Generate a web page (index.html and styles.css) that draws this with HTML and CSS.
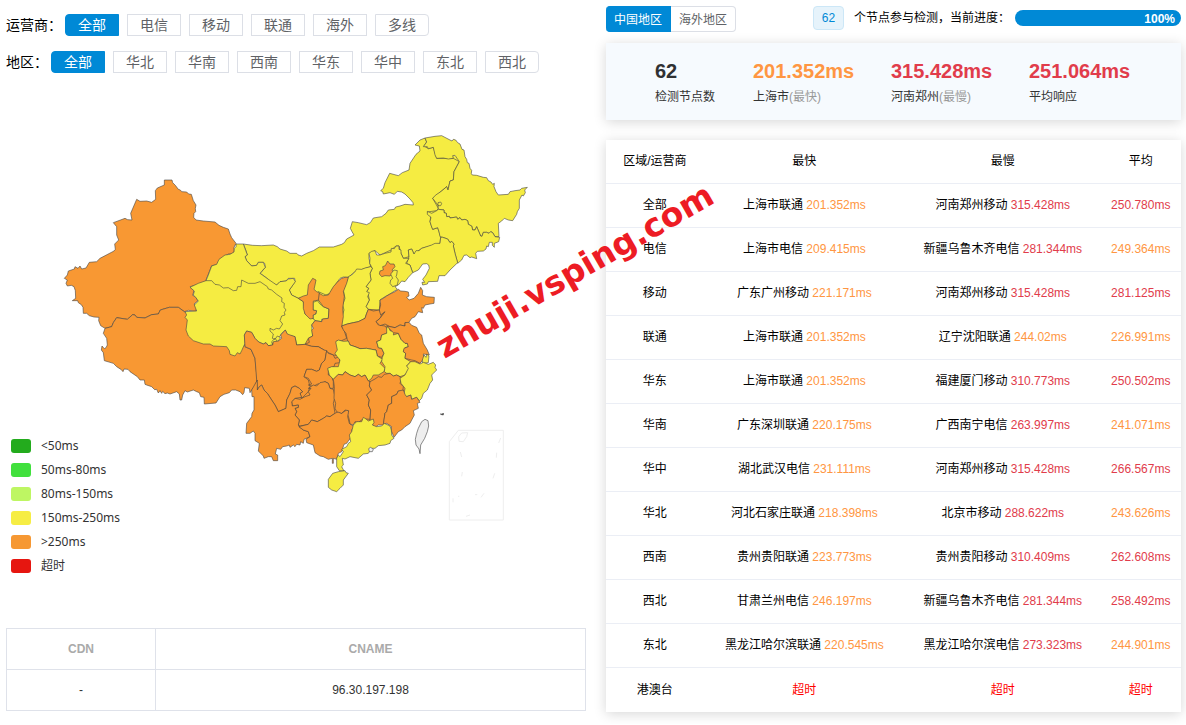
FILE: index.html
```html
<!DOCTYPE html>
<html lang="zh-CN">
<head>
<meta charset="utf-8">
<meta name="viewport" content="width=device-width, initial-scale=1">
<title>Ping 检测</title>
<link rel="stylesheet" href="styles.css">
</head>
<body>
<main class="page">
<section class="left">
  <div class="filters">
    <div class="filter" role="group" aria-labelledby="isp">
      <span class="filter-name" id="isp">运营商：</span>
      <button class="opt active">全部</button><button class="opt">电信</button><button class="opt">移动</button><button class="opt">联通</button><button class="opt">海外</button><button class="opt">多线</button>
    </div>
    <div class="filter" role="group" aria-labelledby="area">
      <span class="filter-name" id="area">地区：</span>
      <button class="opt active">全部</button><button class="opt">华北</button><button class="opt">华南</button><button class="opt">西南</button><button class="opt">华东</button><button class="opt">华中</button><button class="opt">东北</button><button class="opt">西北</button>
    </div>
  </div>
  <div class="chart">
    <svg class="map" viewBox="18 240 1740 1620" role="img" aria-label="中国地图">
      <g class="land">
        <path class="y" transform="translate(870 360)" d="M410,70 500,110 540,200 600,320 560,390 490,400 440,415 370,425 340,470 310,500 250,560 170,600 -20,560 -90,470 0,490 170,480 380,330z"/>
        <path class="o" transform="translate(870 840)" d="M-100,200 100,160 150,140 270,65 320,150 400,235 340,340 300,430 190,430 60,480 -60,430z"/>
      </g>
      <g transform="translate(150 510)">
        <path class="o" d="M343,30 366,30 368,38 376,46 385,58 391,60 395,65 410,66 416,72 424,73 430,92 438,105 436,115 437,125 432,130 431,142 438,150 460,153 495,156 507,166 520,172 535,177 540,192 545,203 558,220 552,232 553,245 545,252 535,252 520,262 505,275 502,284 485,287 478,305 468,330 470,335 421,350 432,362 428,376 436,380 444,392 432,402 440,412 438,424 415,421 403,425 385,412 358,412 331,420 325,432 305,434 285,444 260,442 255,435 248,434 232,448 200,443 190,458 185,470 165,475 152,467 146,452 147,442 132,441 118,437 110,430 100,430 99,412 94,404 85,398 83,392 67,392 77,385 76,362 72,350 64,346 52,348 48,340 52,330 43,325 52,315 55,303 73,297 75,290 84,295 90,288 95,297 108,294 118,277 140,275 150,265 192,243 196,238 194,222 206,210 200,195 200,170 190,158 225,145 233,149 246,150 242,130 260,88 270,94 290,93 305,97 317,88 316,62 322,54 343,45z"/>
        <path class="o" d="M165,475 185,470 190,458 200,443 232,448 248,434 255,435 260,442 285,444 305,434 325,432 331,420 358,412 385,412 403,425 410,430 560,480 585,530 603,538 615,565 622,630 614,650 605,660 600,668 598,655 584,653 582,668 578,674 570,665 557,660 545,660 538,668 522,673 510,680 498,699 463,702 462,682 452,680 448,668 440,665 430,660 412,666 405,662 398,675 395,690 390,690 388,672 380,665 360,672 352,669 345,671 338,664 335,670 330,662 325,669 320,658 314,659 305,650 290,645 285,643 283,630 270,630 262,620 240,605 234,598 222,597 219,605 214,599 200,590 190,580 180,577 163,572 160,548 154,540 156,528 163,536 168,533 172,525 170,505 160,490z"/>
      </g>
      <g transform="translate(870 360)">
        <path class="y" d="M-140,372 -112,376 -85,377 -50,375 -38,380 -30,387 -10,393 0,400 20,400 25,405 35,408 50,400 70,392 88,381 130,381 155,373 163,368 170,357 192,345 186,335 181,325 187,305 205,308 230,314 241,308 250,294 275,290 288,280 295,270 313,268 317,261 330,258 345,253 370,255 369,248 360,237 345,222 335,216 322,214 313,223 300,218 280,222 278,215 272,212 280,205 285,188 299,160 325,167 337,158 357,150 360,130 378,103 390,93 388,78 375,75 390,60 405,54 410,66 402,78 415,86 430,82 440,115 490,115 508,125 492,155 490,180 480,183 474,210 470,200 428,235 445,265 440,272 412,276 422,290 420,305 428,328 443,323 452,350 450,370 395,385 372,402 365,387 355,390 357,410 340,415 333,400 327,378 318,378 303,390 270,405 255,392 237,400 237,415 242,440 195,455 175,472 160,471 150,475 132,500 120,520 108,525 85,515 70,530 25,535 5,525 -2,510 5,500 15,485 14,475 -5,475 -12,483 -30,485 -40,495 -52,490 -65,478 -78,468 -90,460 -85,455 -74,442 -76,430 -80,427 -95,427 -100,436 -115,438 -130,422 -135,410 -128,405 -132,392z"/>
        <path class="y" d="M405,54 435,49 455,47 480,60 486,63 490,58 497,60 503,68 510,72 516,88 522,90 525,110 530,118 532,128 537,130 540,145 545,151 544,161 547,165 560,166 580,172 590,173 595,182 603,186 608,193 613,190 612,200 618,215 625,225 655,223 660,215 675,212 690,210 695,205 712,202 704,210 706,218 700,228 696,225 688,240 688,265 682,275 680,283 668,302 655,300 643,295 635,303 625,310 627,350 615,350 608,338 602,335 597,340 590,337 580,337 576,349 572,348 562,325 560,320 555,330 548,330 545,318 535,313 533,302 525,298 515,300 510,293 503,298 500,291 480,294 478,289 470,290 469,280 462,278 462,270 445,268 444,256 436,245 428,235 436,226 455,213 470,200 474,210 480,183 490,180 492,155 500,140 508,125 495,106 488,107 490,115 475,117 460,114 440,115 435,105 430,82 415,86 412,80 400,80 410,66z"/>
        <path class="n" d="M444,248 452,246 455,251 452,257 444,257z"/>
        <path class="y" d="M445,268 462,270 462,278 469,280 470,290 478,289 480,294 500,291 503,298 510,293 515,300 525,298 533,302 535,313 545,318 548,330 555,330 560,320 572,348 576,349 580,337 590,337 597,340 602,335 608,338 615,350 629,352 626,365 613,370 613,382 607,376 607,367 598,367 595,380 590,378 588,387 580,393 562,394 557,400 560,416 545,411 540,413 530,405 522,406 515,420 503,430 495,400 490,378 492,372 485,364 480,368 473,357 458,352 450,350 447,335 443,323 428,328 424,318 420,305 423,292 412,283 412,274 425,280 440,272z"/>
        <path class="y" d="M452,352 458,352 473,357 480,368 485,364 492,372 490,378 495,400 503,428 480,450 465,467 447,467 443,484 415,485 412,492 398,495 396,487 404,487 398,478 408,465 418,445 416,435 410,431 398,432 385,450 368,458 360,435 350,430 357,410 355,390 365,387 372,402 378,392 387,392 395,385 410,380 425,375 435,370 450,370z"/>
        <path class="y" d="M237,400 245,394 255,392 260,405 270,405 285,400 303,396 304,385 313,386 318,378 327,378 327,388 333,390 333,400 340,415 357,415 347,430 360,435 368,458 355,472 345,485 335,483 325,495 315,500 322,508 312,514 300,522 285,530 270,540 268,570 235,568 228,560 238,540 235,525 230,515 236,505 228,500 243,480 240,460 247,445 239,430 240,415z"/>
        <path class="o" d="M293,423 300,432 312,432 315,440 306,450 310,457 300,468 285,467 275,470 268,462 270,453 280,450 278,440 286,437z"/>
        <path class="y" d="M312,450 322,452 320,465 318,470 325,480 322,495 308,500 300,490 302,480 308,475 302,462z"/>
      </g>
      <g transform="translate(870 840)">
        <path class="y" d="M242,-40 225,-36 215,-32 200,-33 195,-25 185,-15 175,-10 168,10 160,30 165,55 158,75 162,90 155,115 155,138 172,132 190,128 205,125 215,120 225,115 230,100 235,88 228,80 238,60 233,50 238,38 230,35 236,25 228,20 243,0 240,-20 247,-35z"/>
      </g>
      <g transform="translate(540 690)">
        <path class="y" d="M168,42 190,42 202,75 195,80 200,92 215,108 230,106 235,97 250,97 256,112 240,130 265,148 290,165 300,155 318,153 325,147 340,145 346,155 328,180 335,195 355,205 370,215 375,252 400,265 405,272 395,285 398,318 385,325 375,343 350,345 345,320 322,315 316,300 305,310 290,335 265,345 240,300 78,152 85,135 95,108 110,103 117,88 135,75 150,73 162,66 163,55 168,50z"/>
        <path class="y" d="M30,172 55,160 78,152 95,152 105,163 118,165 130,174 145,173 160,182 170,181 173,170 183,170 185,150 205,160 225,160 240,155 262,170 265,177 275,180 290,193 306,204 305,215 313,220 312,232 318,240 313,247 315,255 305,258 300,272 308,282 298,297 290,295 280,300 270,295 270,303 280,312 277,325 285,328 292,318 302,323 293,335 285,325 275,335 278,345 265,347 258,338 250,342 236,336 225,325 215,307 200,303 193,315 195,340 185,362 180,372 172,368 165,378 150,373 148,362 140,350 100,348 90,342 70,342 40,332 25,318 18,300 22,270 15,262 20,255 15,245 50,243 43,225 55,213 47,202 40,195 43,183z"/>
        <path class="o" d="M398,145 408,150 405,165 402,178 410,185 418,188 418,210 400,213 400,240 410,242 408,252 400,255 400,265 390,267 375,252 370,235 370,215 355,205 370,198 382,195 385,165z"/>
        <path class="y" d="M400,217 412,212 420,222 430,230 447,237 445,265 425,268 425,275 405,272 400,265 400,255 408,252 410,242 400,240z"/>
        <path class="o" d="M485,145 495,142 505,142 500,160 490,185 493,200 488,235 490,260 485,290 492,300 500,325 485,332 470,333 475,350 480,365 485,378 460,375 438,365 432,360 415,350 395,349 375,343 388,337 385,325 398,318 395,300 400,295 395,285 405,272 425,275 428,267 445,265 447,237 430,230 415,210 418,190 430,197 445,195 460,170 475,153z"/>
        <path class="o" d="M195,350 193,315 200,303 215,307 225,325 236,336 250,342 258,338 265,347 278,345 280,335 295,333 305,325 302,315 316,300 322,312 345,320 350,345 375,343 395,349 415,350 432,360 440,362 435,390 425,400 418,420 410,424 395,418 380,418 372,440 385,450 390,470 385,485 365,505 360,490 368,485 358,475 345,468 335,473 330,490 320,510 318,535 295,545 285,525 275,510 262,490 252,480 245,465 238,470 232,480 230,450 225,385 213,358z"/>
        <path class="o" d="M440,362 445,370 460,375 465,385 478,380 480,398 465,400 462,410 445,415 445,435 455,440 460,455 460,475 450,475 445,460 435,455 425,460 410,463 400,470 385,465 395,462 385,445 372,440 380,418 395,418 410,424 418,420 425,400 435,390z"/>
        <path class="o" d="M460,478 465,500 460,520 465,550 450,560 440,558 430,565 412,575 395,570 385,583 360,588 355,585 358,570 345,555 350,545 345,535 355,532 355,525 337,528 335,515 345,505 360,508 375,500 390,495 385,485 393,475 385,475 400,465 410,468 420,458 435,455 445,460 450,475z"/>
        <path class="o" d="M215,480 232,450 232,480 238,470 245,465 252,480 262,490 275,510 285,525 295,545 318,535 320,510 330,490 335,473 345,468 358,475 368,485 360,490 365,502 345,505 335,515 337,528 355,525 355,532 345,535 350,545 345,555 358,570 355,585 357,590 370,600 385,605 390,620 372,628 370,640 362,635 360,645 350,643 345,650 340,645 330,652 328,645 320,648 308,650 302,658 290,655 286,672 293,675 293,692 280,692 275,680 265,680 252,685 250,678 235,663 238,640 225,632 225,610 220,603 210,610 198,610 200,580 215,560 216,550 222,540 222,500 216,500z"/>
        <path class="o" d="M465,550 475,545 485,550 500,540 508,545 503,560 508,580 522,590 515,600 518,615 500,640 492,643 485,665 475,670 470,688 460,685 460,700 457,700 457,685 445,688 430,680 420,678 405,668 400,645 380,638 378,628 390,620 385,605 370,600 357,590 385,583 395,570 412,575 430,565 440,558 450,560z"/>
      </g>
      <g transform="translate(870 840)">
        <path class="o" d="M155,138 172,132 190,128 205,125 215,120 225,115 230,100 235,88 250,93 268,90 272,100 285,95 275,105 270,115 258,125 265,135 285,138 295,150 290,160 275,165 272,180 260,185 265,203 275,205 282,220 275,232 262,228 258,210 245,208 230,205 210,206 195,200 180,195 172,180 168,160 160,150z"/>
        <path class="y" d="M137,185 145,180 160,184 175,183 180,195 195,200 210,206 230,205 245,208 258,210 262,228 278,238 270,250 285,265 282,275 265,285 250,285 245,295 235,303 225,285 215,290 205,283 195,290 180,285 165,275 158,285 145,283 130,298 118,285 113,265 125,260 145,260 150,240 140,228 135,220 142,210z"/>
        <path class="o" d="M130,298 145,283 158,285 165,275 180,285 195,290 205,283 215,290 225,285 235,303 240,305 238,318 245,330 230,345 238,360 235,375 242,390 240,418 228,417 215,420 205,427 195,425 190,435 180,432 178,420 174,405 176,392 165,390 155,400 140,395 135,385 137,370 132,355 133,320z"/>
        <path class="y" d="M290,140 297,142 300,152 312,155 310,165 325,160 333,178 345,190 352,190 355,200 345,203 340,215 347,220 345,235 362,245 350,258 358,265 345,285 330,290 320,285 310,288 300,280 290,280 283,275 285,260 275,245 277,232 282,220 275,205 265,203 260,185 272,180 275,165 290,160z"/>
        <path class="o" d="M240,305 255,297 265,290 275,292 283,283 300,280 310,288 320,285 330,290 333,300 330,310 340,320 338,335 325,333 320,343 305,350 305,370 295,375 290,395 285,400 280,435 265,435 255,442 240,425 242,390 235,375 238,360 230,345 245,330 238,318z"/>
        <path class="o" d="M270,60 280,55 290,48 300,42 315,35 325,28 332,33 345,34 355,36 357,48 350,52 357,60 372,55 385,40 392,22 398,32 397,45 410,50 433,52 432,70 420,72 405,75 400,85 395,83 398,98 385,95 375,110 365,115 355,130 345,128 345,138 330,135 315,143 300,140 285,132 270,137 258,125 270,115 285,95 272,105 268,90 272,75z"/>
        <path class="o" d="M290,138 315,143 330,135 345,138 345,128 357,127 365,136 380,142 388,160 395,165 400,190 412,210 418,225 400,222 402,235 390,250 375,242 365,240 345,235 347,220 340,215 342,205 355,200 352,190 345,190 333,178 325,160 310,158z"/>
        <path class="y" d="M402,225 408,232 410,222 417,228 415,248 398,250 397,240z"/>
        <path class="y" d="M362,245 375,245 390,252 400,247 415,253 430,247 437,255 435,262 440,270 430,280 425,285 428,300 420,310 412,330 400,340 395,355 388,362 380,352 365,358 362,345 350,350 342,343 345,325 333,310 330,295 345,285 355,265 350,258z"/>
        <path class="o" d="M340,330 345,343 350,350 362,345 365,358 380,352 390,367 382,370 385,385 370,392 373,405 365,420 360,430 345,440 335,450 325,455 312,472 303,450 305,440 290,430 280,432 285,400 290,395 295,375 305,370 305,350 320,343 325,333z"/>
        <path class="y" d="M190,435 200,425 215,425 220,412 228,417 235,423 250,417 252,428 247,435 260,440 275,438 283,430 300,438 304,450 305,465 312,475 302,482 300,490 285,495 265,497 255,505 245,505 235,520 220,522 205,535 180,530 165,537 157,535 160,555 155,560 162,573 148,572 140,560 140,535 145,525 150,530 160,515 155,508 170,500 175,490 182,485 178,465 185,455z"/>
        <path class="y" d="M145,575 165,572 168,578 175,580 160,600 160,615 150,625 140,635 125,630 115,622 115,598 128,580z"/>
        <path class="w" d="M236,506 242,502 250,508 247,515 238,515z"/>
        <path class="g" d="M405,418 414,422 416,438 412,455 404,475 392,495 390,521 387,507 378,495 376,478 380,460 385,445 395,425z"/>
        <path class="d" d="M451,402 457,402 460,399 460,405 455,404z"/>
      </g>
      <g class="isles" transform="translate(1200 1200)">
        <path d="M148,125 175,91 310,91 310,360 148,360zM176,110 185,99 203,98 200,110 190,125 177,124zM302,114 296,129M290,158 289,173M284,220 279,235M252,280 243,292M210,345 198,349M159,295 159,307M187,216 185,229M181,156 185,171M225,284 232,284M174,289 178,289"/>
      </g>
    </svg>
    <ul class="legend">
      <li><i class="swatch c1"></i>&lt;50ms</li>
      <li><i class="swatch c2"></i>50ms-80ms</li>
      <li><i class="swatch c3"></i>80ms-150ms</li>
      <li><i class="swatch c4"></i>150ms-250ms</li>
      <li><i class="swatch c5"></i>&gt;250ms</li>
      <li><i class="swatch c6"></i>超时</li>
    </ul>
  </div>
  <table class="dns">
    <thead><tr><th class="cdn">CDN</th><th>CNAME</th></tr></thead>
    <tbody><tr><td>-</td><td>96.30.197.198</td></tr></tbody>
  </table>
</section>
<section class="right">
  <div class="topbar">
    <div class="tabs"><button class="tab on">中国地区</button><button class="tab">海外地区</button></div>
    <div class="status">
      <span class="badge">62</span>
      <span class="status-text">个节点参与检测，当前进度：</span>
      <div class="progress" role="progressbar" aria-valuenow="100" aria-label="当前进度">100%</div>
    </div>
  </div>
  <div class="stats">
    <div><strong>62</strong><span>检测节点数</span></div>
    <div><strong class="mid">201.352ms</strong><span>上海市<em>(最快)</em></span></div>
    <div><strong class="slow">315.428ms</strong><span>河南郑州<em>(最慢)</em></span></div>
    <div><strong class="slow">251.064ms</strong><span>平均响应</span></div>
  </div>
  <table class="results">
    <colgroup><col class="k1"><col class="k2"><col class="k3"><col class="k4"></colgroup>
    <thead><tr><th>区域/运营商</th><th>最快</th><th>最慢</th><th>平均</th></tr></thead>
    <tbody>
    <tr><td>全部</td><td>上海市联通 <b class="mid">201.352ms</b></td><td>河南郑州移动 <b class="slow">315.428ms</b></td><td><b class="slow">250.780ms</b></td></tr>
    <tr><td>电信</td><td>上海市电信 <b class="mid">209.415ms</b></td><td>新疆乌鲁木齐电信 <b class="slow">281.344ms</b></td><td><b class="mid">249.364ms</b></td></tr>
    <tr><td>移动</td><td>广东广州移动 <b class="mid">221.171ms</b></td><td>河南郑州移动 <b class="slow">315.428ms</b></td><td><b class="slow">281.125ms</b></td></tr>
    <tr><td>联通</td><td>上海市联通 <b class="mid">201.352ms</b></td><td>辽宁沈阳联通 <b class="mid">244.02ms</b></td><td><b class="mid">226.991ms</b></td></tr>
    <tr><td>华东</td><td>上海市联通 <b class="mid">201.352ms</b></td><td>福建厦门移动 <b class="slow">310.773ms</b></td><td><b class="slow">250.502ms</b></td></tr>
    <tr><td>华南</td><td>广东深圳联通 <b class="mid">220.175ms</b></td><td>广西南宁电信 <b class="slow">263.997ms</b></td><td><b class="mid">241.071ms</b></td></tr>
    <tr><td>华中</td><td>湖北武汉电信 <b class="mid">231.111ms</b></td><td>河南郑州移动 <b class="slow">315.428ms</b></td><td><b class="slow">266.567ms</b></td></tr>
    <tr><td>华北</td><td>河北石家庄联通 <b class="mid">218.398ms</b></td><td>北京市移动 <b class="slow">288.622ms</b></td><td><b class="mid">243.626ms</b></td></tr>
    <tr><td>西南</td><td>贵州贵阳联通 <b class="mid">223.773ms</b></td><td>贵州贵阳移动 <b class="slow">310.409ms</b></td><td><b class="slow">262.608ms</b></td></tr>
    <tr><td>西北</td><td>甘肃兰州电信 <b class="mid">246.197ms</b></td><td>新疆乌鲁木齐电信 <b class="slow">281.344ms</b></td><td><b class="slow">258.492ms</b></td></tr>
    <tr><td>东北</td><td>黑龙江哈尔滨联通 <b class="mid">220.545ms</b></td><td>黑龙江哈尔滨电信 <b class="slow">273.323ms</b></td><td><b class="mid">244.901ms</b></td></tr>
    <tr><td>港澳台</td><td><b class="timeout">超时</b></td><td><b class="timeout">超时</b></td><td><b class="timeout">超时</b></td></tr>
    </tbody>
  </table>
</section>
<div class="watermark">zhuji.vsping.com</div>
</main>
</body>
</html>
```
FILE: styles.css
```css
* { box-sizing: border-box; }
body {
  margin: 0;
  background: #fff;
  color: #000;
  font: 12px/18px "Liberation Sans", "Noto Sans CJK SC", sans-serif;
}
button { font-family: inherit; cursor: pointer; }
table { width: 100%; table-layout: fixed; }

.page {
  position: relative;
  display: grid;
  grid-template-columns: 580fr 575fr;
  gap: 20px;
  padding: 6px 5px 12px 6px;
  overflow: hidden;
}

.filters { display: flex; flex-direction: column; gap: 15px; padding-top: 8px; }
.filter { display: flex; align-items: center; gap: 8px; }
.filter-name { font-size: 14px; line-height: 22px; margin-right: -5px; white-space: nowrap; }
.opt {
  width: 54px;
  height: 22px;
  padding: 0;
  border: 1px solid #dcdfe6;
  background: #fff;
  color: #606266;
  font-size: 14px;
  line-height: 20px;
}
.opt:last-child { border-radius: 0 4px 4px 0; }
.opt.active { background: #0089d6; border-color: #0089d6; color: #fff; border-radius: 4px 0 0 4px; }

.chart { position: relative; margin-top: 7px; }
.map { display: block; width: 100%; }
.map path { stroke: #444; stroke-opacity: .6; stroke-width: 3; stroke-linejoin: round; }
.map .land path { stroke: none; }
.map .o { fill: #f89833; }
.map .y { fill: #f5ec42; }
.map .n { fill: none; }
.map .w { fill: #eee; }
.map .g { fill: #eee; }
.map .d { fill: #444; }
.map .isles path { fill: none; stroke: #eee; stroke-opacity: 1; }
.legend {
  position: absolute;
  left: 5px;
  bottom: 42px;
  margin: 0;
  padding: 0;
  list-style: none;
  color: #333;
  font: 12px/22px "Noto Sans", "Noto Sans CJK SC", sans-serif;
}
.legend li { display: flex; align-items: center; gap: 10px; height: 24px; }
.swatch { width: 20px; height: 14px; border-radius: 3px; }
.c1 { background: #23ab1d; }
.c2 { background: #41e03d; }
.c3 { background: #bef663; }
.c4 { background: #f6ed44; }
.c5 { background: #f69833; }
.c6 { background: #e61610; }

.dns { margin-top: 8px; border-collapse: collapse; }
.dns th, .dns td { border: 1px solid #dfe2ea; height: 41px; padding: 0; text-align: center; color: #333; }
.dns th { color: #aaa; }
.dns .cdn { width: 149px; }

.topbar { display: flex; justify-content: space-between; align-items: flex-start; gap: 12px; }
.tabs { display: flex; }
.tab {
  height: 26px;
  padding: 0 8px 2px;
  border: 1px solid #dcdfe6;
  border-left: 0;
  border-radius: 0 4px 4px 0;
  background: #fff;
  color: #606266;
  font-size: 12px;
  white-space: nowrap;
}
.tab.on { background: #0089d6; border-color: #0089d6; border-radius: 4px 0 0 4px; color: #fff; }
.status { display: flex; align-items: center; width: 368px; height: 24px; }
.badge {
  width: 31px;
  height: 24px;
  border: 1px solid #cce7f7;
  border-radius: 4px;
  background: #e6f3fb;
  color: #0089d6;
  line-height: 22px;
  text-align: center;
}
.status-text { margin: 0 5px 0 10px; white-space: nowrap; }
.progress {
  flex: 1;
  height: 16px;
  padding-right: 6px;
  border-radius: 8px;
  background: #0089d6;
  color: #fff;
  font-weight: bold;
  line-height: 18px;
  text-align: right;
}

.stats {
  display: grid;
  grid-template-columns: 98fr 138fr 138fr 152fr;
  margin-top: 11px;
  padding: 16px 0 14px 49px;
  background: #f6fafe;
  box-shadow: 0 2px 12px rgba(0, 0, 0, .16);
}
.stats strong { display: block; color: #303133; font-size: 20px; line-height: 24px; }
.stats span { display: block; margin-top: 5px; color: #333; }
.stats em { color: #999; font-style: normal; }
.stats .mid, .results .mid { color: #ff9642; }
.stats .slow, .results .slow { color: #e13c4b; }

.results { margin-top: 20px; border-collapse: separate; border-spacing: 0; box-shadow: 0 2px 12px rgba(0, 0, 0, .16); }
.results th, .results td { height: 44px; padding: 0 0 1px; border-bottom: 1px solid #ebeef5; text-align: center; font-weight: normal; white-space: nowrap; }
.results tr:last-child td { border-bottom: 0; }
.results thead th { border-bottom: 1px solid #ebeef5; }
.results b { font-weight: normal; }
.results .timeout { color: #f00; }
.k1 { width: 17%; }
.k2 { width: 35%; }
.k3 { width: 34%; }
.k4 { width: 14%; }

.watermark {
  position: absolute;
  left: 448px;
  top: 328px;
  color: #ed1c24;
  font: bold 33px/37px "DejaVu Sans", sans-serif;
  transform: rotate(-30deg);
  transform-origin: 0 100%;
  white-space: nowrap;
  pointer-events: none;
}
```
